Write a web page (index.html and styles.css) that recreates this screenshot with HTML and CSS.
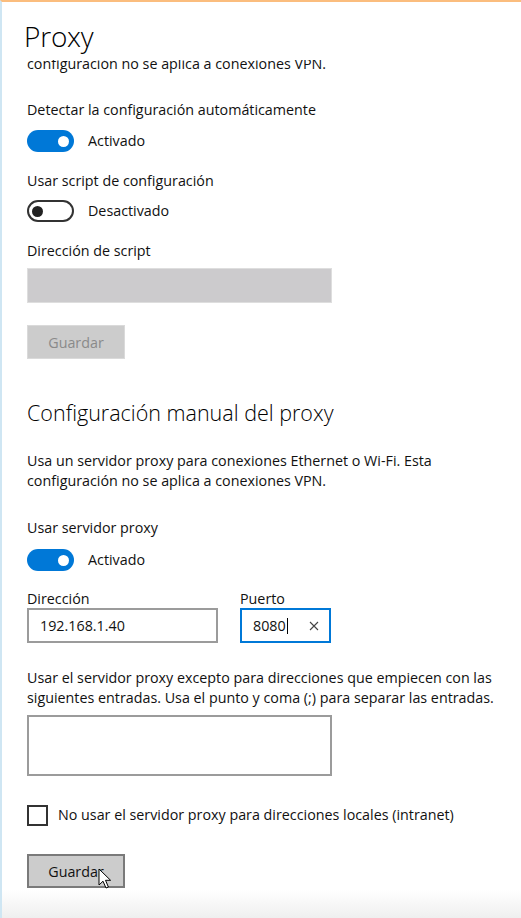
FILE: index.html
```html
<!DOCTYPE html>
<html lang="es">
<head>
<meta charset="utf-8">
<title>Proxy</title>
<link rel="stylesheet" href="styles.css">
</head>
<body>
<div class="window">
  <header class="page-header">
    <h1 class="page-title">Proxy</h1>
  </header>
  <main class="content">
    <div class="scroll-clip">
      <p class="text">Usa un servidor proxy para conexiones Ethernet o Wi-Fi. Esta configuración no se aplica a conexiones VPN.</p>
    </div>

    <div class="label mt-26">Detectar la configuración automáticamente</div>
    <div class="toggle-row mt-10">
      <span class="toggle on"><span class="knob"></span></span>
      <span class="toggle-text">Activado</span>
    </div>

    <div class="label mt-19">Usar script de configuración</div>
    <div class="toggle-row mt-9">
      <span class="toggle off"><span class="knob"></span></span>
      <span class="toggle-text">Desactivado</span>
    </div>

    <div class="label mt-19">Dirección de script</div>
    <div class="field disabled mt-7"></div>
    <button class="btn disabled mt-22">Guardar</button>

    <h2 class="section-title">Configuración manual del proxy</h2>
    <p class="text mt-24">Usa un servidor proxy para conexiones Ethernet o Wi-Fi. Esta configuración no se aplica a conexiones VPN.</p>

    <div class="label mt-27">Usar servidor proxy</div>
    <div class="toggle-row mt-11">
      <span class="toggle on"><span class="knob"></span></span>
      <span class="toggle-text">Activado</span>
    </div>

    <div class="address-row">
      <div class="address-col">
        <div class="small-label">Dirección</div>
        <div class="field input addr"><span class="value">192.168.1.40</span></div>
      </div>
      <div class="address-col">
        <div class="small-label">Puerto</div>
        <div class="field input port focused">
          <span class="value">8080</span><span class="caret"></span>
          <svg class="clear" width="10" height="10" viewBox="0 0 10 10"><path d="M1 1L9 9M9 1L1 9" stroke="#444" stroke-width="1.1" fill="none"/></svg>
        </div>
      </div>
    </div>

    <p class="text mt-25">Usar el servidor proxy excepto para direcciones que empiecen con las siguientes entradas. Usa el punto y coma (;) para separar las entradas.</p>
    <div class="field textarea mt-7"></div>

    <label class="check-row">
      <span class="checkbox"></span>
      <span class="check-text">No usar el servidor proxy para direcciones locales (intranet)</span>
    </label>

    <div class="save-wrap">
      <button class="btn normal">Guardar</button>
      <svg class="cursor" width="14" height="22" viewBox="0 0 14 22"><path d="M1 1 L1 17 L5 13.2 L8 20 L10.4 19 L7.5 12.3 L12.6 12.3 Z" fill="#fff" stroke="#000" stroke-width="1" stroke-linejoin="round"/></svg>
    </div>
  </main>
  <div class="bottom-fade"></div>
</div>
</body>
</html>
```

FILE: styles.css
```css
* { box-sizing: border-box; }
html, body { margin: 0; padding: 0; }
body {
  width: 521px;
  height: 918px;
  overflow: hidden;
  background: #ffffff;
  font-family: "Open Sans", "Noto Sans", sans-serif;
  color: #111;
}
.window {
  position: relative;
  height: 918px;
  border-top: 2px solid #fbbd7e;
  border-left: 2px solid #cfe6f3;
  overflow: hidden;
}
.page-header {
  height: 58px;
  padding: 16px 0 0 22px;
}
.page-title {
  margin: 0;
  font-family: "Open Sans", sans-serif;
  font-weight: 300;
  font-size: 28px;
  line-height: 36px;
  letter-spacing: -0.2px;
  color: #000;
}
.content {
  padding-left: 25px;
  display: flex;
  flex-direction: column;
  align-items: flex-start;
}
.scroll-clip {
  height: 14px;
  overflow: hidden;
  display: flex;
  flex-direction: column;
  justify-content: flex-end;
}
.text {
  margin: 0;
  width: 472px;
  font-size: 14.3px;
  line-height: 20px;
  color: #111;
}
.label, .toggle-text, .check-text {
  font-size: 14.3px;
  line-height: 20px;
  color: #111;
}
.mt-7 { margin-top: 7px; }
.mt-9 { margin-top: 9px; }
.mt-10 { margin-top: 10px; }
.mt-11 { margin-top: 11px; }
.mt-19 { margin-top: 19px; }
.mt-22 { margin-top: 22px; }
.mt-24 { margin-top: 24px; }
.mt-25 { margin-top: 25px; }
.mt-26 { margin-top: 26px; }
.mt-27 { margin-top: 27px; }

.toggle-row {
  display: flex;
  align-items: center;
  gap: 14px;
  height: 22px;
}
.toggle {
  width: 47px;
  height: 22px;
  border-radius: 11px;
  display: flex;
  align-items: center;
  padding: 0 5px;
}
.toggle.on {
  background: #0078d7;
  justify-content: flex-end;
}
.toggle.off {
  border: 2px solid #333;
  justify-content: flex-start;
  padding: 0 3px;
}
.knob {
  width: 11px;
  height: 11px;
  border-radius: 50%;
}
.toggle.on .knob { background: #fff; }
.toggle.off .knob { background: #222; }

.field {
  width: 305px;
  height: 35px;
}
.field.disabled {
  background: #cccbcd;
  border: 1px solid #dedede;
}
.btn {
  font-family: "Open Sans", sans-serif;
  font-size: 14.3px;
  width: 98px;
  height: 34px;
  padding: 0;
}
.btn.disabled {
  background: #cccccc;
  border: 1px solid #dadada;
  color: #8a8a8a;
}
.btn.normal {
  background: #cccccc;
  border: 2px solid #7a7a7a;
  color: #111;
}
.section-title {
  margin: 40px 0 0 0;
  font-weight: 300;
  font-size: 21.5px;
  line-height: 28px;
  color: #000;
}
.address-row {
  display: flex;
  gap: 22px;
  margin-top: 18px;
}
.address-col {
  display: flex;
  flex-direction: column;
}
.small-label {
  font-size: 14.3px;
  line-height: 19px;
  color: #111;
}
.field.input {
  height: 35px;
  border: 2px solid #9b9b9b;
  display: flex;
  align-items: center;
  padding-left: 11px;
  font-size: 14.3px;
  color: #111;
}
.field.addr { width: 191px; }
.field.port {
  width: 91px;
  border-color: #0078d7;
}
.caret {
  width: 1px;
  height: 16px;
  background: #000;
  margin-left: 1px;
}
.clear {
  margin-left: auto;
  margin-right: 10px;
}
.field.textarea {
  height: 61px;
  border: 2px solid #9b9b9b;
  width: 305px;
}
.check-row {
  display: flex;
  align-items: center;
  gap: 10px;
  margin-top: 28px;
  height: 22px;
}
.checkbox {
  width: 21px;
  height: 21px;
  border: 2px solid #333;
}
.save-wrap {
  position: relative;
  margin-top: 28px;
}
.cursor {
  position: absolute;
  left: 71px;
  top: 14px;
}
.bottom-fade {
  position: absolute;
  left: 0;
  right: 0;
  bottom: 0;
  height: 28px;
  background: linear-gradient(#ffffff, #efefef);
}
```
